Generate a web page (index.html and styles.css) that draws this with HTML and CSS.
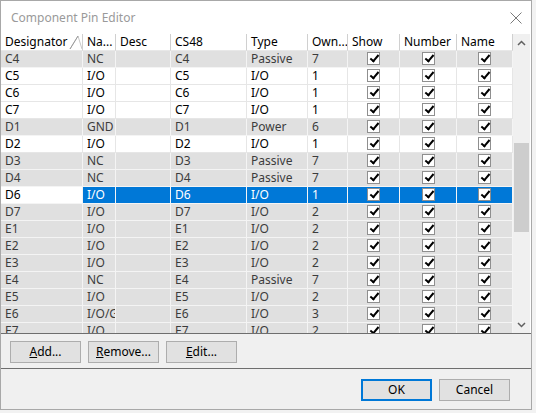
FILE: index.html
```html
<!DOCTYPE html>
<html lang="en">
<head>
  <meta charset="UTF-8">
  <title>Component Pin Editor</title>
  <link rel="stylesheet" href="styles.css">
</head>
<body>

<div class="window">
  <!-- Barre de titre -->
  <div class="titlebar">
    <span class="title">Component Pin Editor</span>
    <svg class="close" width="12" height="12" viewBox="0 0 12 12">
      <path d="M0.5 0.5 L11.5 11.5 M11.5 0.5 L0.5 11.5" stroke="#7a7a7a" stroke-width="1" fill="none"/>
    </svg>
  </div>

  <!-- Grille des broches -->
  <div class="grid">
    <div class="table-wrap">
      <table class="pins">
        <tr>
          <th class="c-des">Designator<svg class="sort" width="14" height="15" viewBox="0 0 14 15"><path d="M1 14 L9 1 L13 14" stroke="#c8c8c8" fill="none"/><path d="M1 14 L9 1" stroke="#9a9a9a" fill="none"/></svg></th>
          <th class="c-name">Na...</th>
          <th class="c-desc">Desc</th>
          <th class="c-cs">CS48</th>
          <th class="c-type">Type</th>
          <th class="c-own">Own...</th>
          <th class="c-show">Show</th>
          <th class="c-num">Number</th>
          <th class="c-nm">Name</th>
        </tr>
        <tr class="locked"><td>C4</td><td>NC</td><td></td><td>C4</td><td>Passive</td><td>7</td><td class="cb"><span class="chk"></span></td><td class="cb"><span class="chk"></span></td><td class="cb"><span class="chk"></span></td></tr>
        <tr><td>C5</td><td>I/O</td><td></td><td>C5</td><td>I/O</td><td>1</td><td class="cb"><span class="chk"></span></td><td class="cb"><span class="chk"></span></td><td class="cb"><span class="chk"></span></td></tr>
        <tr><td>C6</td><td>I/O</td><td></td><td>C6</td><td>I/O</td><td>1</td><td class="cb"><span class="chk"></span></td><td class="cb"><span class="chk"></span></td><td class="cb"><span class="chk"></span></td></tr>
        <tr><td>C7</td><td>I/O</td><td></td><td>C7</td><td>I/O</td><td>1</td><td class="cb"><span class="chk"></span></td><td class="cb"><span class="chk"></span></td><td class="cb"><span class="chk"></span></td></tr>
        <tr class="locked"><td>D1</td><td>GND</td><td></td><td>D1</td><td>Power</td><td>6</td><td class="cb"><span class="chk"></span></td><td class="cb"><span class="chk"></span></td><td class="cb"><span class="chk"></span></td></tr>
        <tr><td>D2</td><td>I/O</td><td></td><td>D2</td><td>I/O</td><td>1</td><td class="cb"><span class="chk"></span></td><td class="cb"><span class="chk"></span></td><td class="cb"><span class="chk"></span></td></tr>
        <tr class="locked"><td>D3</td><td>NC</td><td></td><td>D3</td><td>Passive</td><td>7</td><td class="cb"><span class="chk"></span></td><td class="cb"><span class="chk"></span></td><td class="cb"><span class="chk"></span></td></tr>
        <tr class="locked"><td>D4</td><td>NC</td><td></td><td>D4</td><td>Passive</td><td>7</td><td class="cb"><span class="chk"></span></td><td class="cb"><span class="chk"></span></td><td class="cb"><span class="chk"></span></td></tr>
        <tr class="selected"><td class="focus">D6</td><td>I/O</td><td></td><td>D6</td><td>I/O</td><td>1</td><td class="cb"><span class="chk"></span></td><td class="cb"><span class="chk"></span></td><td class="cb"><span class="chk"></span></td></tr>
        <tr class="locked"><td>D7</td><td>I/O</td><td></td><td>D7</td><td>I/O</td><td>2</td><td class="cb"><span class="chk"></span></td><td class="cb"><span class="chk"></span></td><td class="cb"><span class="chk"></span></td></tr>
        <tr class="locked"><td>E1</td><td>I/O</td><td></td><td>E1</td><td>I/O</td><td>2</td><td class="cb"><span class="chk"></span></td><td class="cb"><span class="chk"></span></td><td class="cb"><span class="chk"></span></td></tr>
        <tr class="locked"><td>E2</td><td>I/O</td><td></td><td>E2</td><td>I/O</td><td>2</td><td class="cb"><span class="chk"></span></td><td class="cb"><span class="chk"></span></td><td class="cb"><span class="chk"></span></td></tr>
        <tr class="locked"><td>E3</td><td>I/O</td><td></td><td>E3</td><td>I/O</td><td>2</td><td class="cb"><span class="chk"></span></td><td class="cb"><span class="chk"></span></td><td class="cb"><span class="chk"></span></td></tr>
        <tr class="locked"><td>E4</td><td>NC</td><td></td><td>E4</td><td>Passive</td><td>7</td><td class="cb"><span class="chk"></span></td><td class="cb"><span class="chk"></span></td><td class="cb"><span class="chk"></span></td></tr>
        <tr class="locked"><td>E5</td><td>I/O</td><td></td><td>E5</td><td>I/O</td><td>2</td><td class="cb"><span class="chk"></span></td><td class="cb"><span class="chk"></span></td><td class="cb"><span class="chk"></span></td></tr>
        <tr class="locked"><td>E6</td><td>I/O/GTX</td><td></td><td>E6</td><td>I/O</td><td>3</td><td class="cb"><span class="chk"></span></td><td class="cb"><span class="chk"></span></td><td class="cb"><span class="chk"></span></td></tr>
        <tr class="locked"><td>E7</td><td>I/O</td><td></td><td>E7</td><td>I/O</td><td>2</td><td class="cb"><span class="chk"></span></td><td class="cb"><span class="chk"></span></td><td class="cb"><span class="chk"></span></td></tr>
      </table>
    </div>

    <!-- Barre de défilement -->
    <div class="scrollbar">
      <div class="sb-btn">
        <svg width="9" height="6" viewBox="0 0 9 6"><path d="M1 5 L4.5 1.5 L8 5" stroke="#606060" stroke-width="1.5" fill="none"/></svg>
      </div>
      <div class="sb-track"><div class="sb-thumb"></div></div>
      <div class="sb-btn">
        <svg width="9" height="6" viewBox="0 0 9 6"><path d="M1 1 L4.5 4.5 L8 1" stroke="#606060" stroke-width="1.5" fill="none"/></svg>
      </div>
    </div>
  </div>

  <!-- Boutons d'édition -->
  <div class="tools">
    <button class="btn"><u>A</u>dd...</button>
    <button class="btn"><u>R</u>emove...</button>
    <button class="btn"><u>E</u>dit...</button>
  </div>

  <!-- Boutons de validation -->
  <div class="footer">
    <button class="btn btn-default">OK</button>
    <button class="btn">Cancel</button>
  </div>
</div>

</body>
</html>
```

FILE: styles.css
```css
body {
  margin: 0;
  background: #f2f2f2;
  font-family: "Noto Sans", "DejaVu Sans", sans-serif;
  font-size: 12px;
}

.window {
  width: 532px;
  height: 410px;
  box-sizing: border-box;
  border: 1px solid #a8a8a8;
  background: #f0f0f0;
  display: flex;
  flex-direction: column;
}

.titlebar {
  height: 33px;
  flex: none;
  background: #fff;
  display: flex;
  align-items: center;
  justify-content: space-between;
  padding: 0 9px 0 10px;
}

.title {
  color: #9a9a9a;
  font-size: 12px;
}

.close {
  margin-top: 1px;
}

/* grille */
.grid {
  height: 299px;
  flex: none;
  display: flex;
  border-bottom: 1px solid #6e6e6e;
  background: #fff;
}

.table-wrap {
  width: 512px;
  overflow: hidden;
}

.pins {
  table-layout: fixed;
  width: 512px;
  border-collapse: separate;
  border-spacing: 0;
}

.pins th, .pins td {
  box-sizing: border-box;
  padding: 0 0 0 4px;
  height: 17px;
  line-height: 16px;
  white-space: nowrap;
  overflow: hidden;
  text-align: left;
  font-weight: normal;
}

.pins th {
  background: #fff;
  color: #000;
  border-right: 1px solid #d0d0d0;
  border-bottom: 1px solid #e8e8e8;
}

.sort {
  vertical-align: top;
  margin: 1px 0 0 2px;
}

.c-des { width: 82px; }
.c-name { width: 33px; }
.c-desc { width: 55px; }
.c-cs { width: 76px; }
.c-type { width: 61px; }
.c-own { width: 40px; }
.c-show { width: 52px; }
.c-num { width: 57px; }
.c-nm { width: 56px; }

.pins td {
  color: #000;
  background: #fff;
  border-right: 1px solid #e6e6e6;
  border-bottom: 1px solid #e6e6e6;
}

.pins tr.locked td {
  color: #3c3c3c;
  background: #e0e0e0;
  border-color: #f4f4f4;
}

.pins tr.selected td {
  color: #fff;
  background: #0078d7;
  border-color: #f4f4f4;
}

.pins tr.selected td.focus {
  color: #000;
  background: #fff;
}

.pins td.cb {
  text-align: center;
  padding: 0;
}

.chk {
  display: inline-block;
  position: relative;
  width: 13px;
  height: 13px;
  box-sizing: border-box;
  border: 1px solid #8f8f8f;
  background: #fff;
  vertical-align: -2px;
}

.chk::after {
  content: "";
  position: absolute;
  left: 4px;
  top: 0px;
  width: 3px;
  height: 7px;
  border: solid #000;
  border-width: 0 2px 2px 0;
  transform: rotate(40deg);
}

/* barre de défilement */
.scrollbar {
  width: 17px;
  background: #f0f0f0;
  display: flex;
  flex-direction: column;
}

.sb-btn {
  height: 17px;
  display: flex;
  align-items: center;
  justify-content: center;
}

.sb-track {
  flex: 1;
}

.sb-thumb {
  margin: 92px 1px 0 1px;
  height: 89px;
  background: #cdcdcd;
}

/* boutons */
.tools {
  height: 35px;
  flex: none;
  box-sizing: border-box;
  padding: 7px 0 0 9px;
  display: flex;
  gap: 7px;
  border-bottom: 1px solid #6e6e6e;
}

.footer {
  flex: 1;
  display: flex;
  justify-content: flex-end;
  gap: 7px;
  padding: 10px 21px 0 0;
}

.btn {
  width: 71px;
  height: 22px;
  box-sizing: border-box;
  background: #e1e1e1;
  border: 1px solid #adadad;
  font-family: "Noto Sans", "DejaVu Sans", sans-serif;
  font-size: 12px;
  color: #000;
  padding: 0;
  line-height: 18px;
}

.btn-default {
  border: 2px solid #0078d7;
}
```
